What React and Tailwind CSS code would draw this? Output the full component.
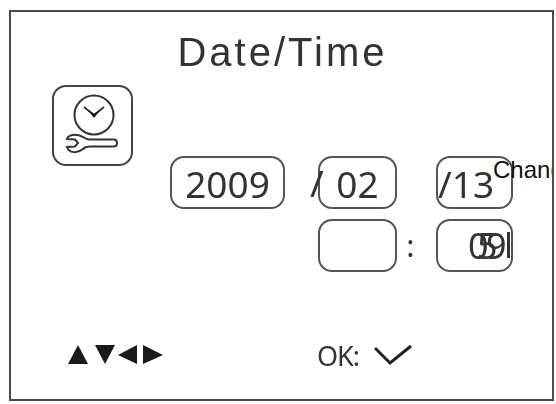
function ClockWrench() {
  return (
    <svg width="56" height="64" viewBox="0 0 56 64" fill="none" stroke="#333" strokeWidth="2">
      <circle cx="29" cy="21" r="19.5" />
      <path d="M19 13 L29 21 L39 13" strokeWidth="1.8" />
      <path d="M22 15 L29 24 L36 15 L29 20 Z" fill="#111" stroke="none" />
      <path d="M18 43 C10 39 3 41 2 45 L10 45.5 L13 49 L10 52.5 L2 53 C4 59 12 60 18 55 C20 53 22 52.5 25 52.5 L49 52.5 C53 52.5 53 45.5 49 45.5 L25 45.5 C22 45.5 20 44.5 18 43 Z" />
    </svg>
  );
}

function Field({ className, children }) {
  return (
    <div className={`relative h-[53px] rounded-[14px] border-2 border-[#555] flex items-center justify-center pt-[2px] text-[37px] leading-none text-[#333] font-['Noto_Sans',sans-serif] ${className}`}>
      {children}
    </div>
  );
}

export default function App() {
  return (
    <div className="w-[556px] h-[404px] bg-white pt-[10px] pl-[9px]">
      <div className="relative w-[545px] h-[391px] border-2 border-[#4a4a4a] overflow-hidden flex flex-col">
        <h1 className="mt-[19px] h-[42px] pl-[2px] text-center text-[40px] leading-[42px] tracking-[3px] text-[#333] font-['Liberation_Sans',sans-serif] blur-[0.4px]">
          Date/Time
        </h1>
        <div className="ml-[41px] mt-[12px] w-[81px] h-[81px] rounded-[14px] border-2 border-[#444] flex items-center justify-center">
          <ClockWrench />
        </div>
        <div className="ml-[159px] -mt-[10px] flex flex-col gap-[10px] blur-[0.3px]">
          <div className="flex items-center">
            <Field className="w-[115px]">2009</Field>
            <span className="w-[33px] pl-[25px] text-[37px] leading-none text-[#333] font-['Noto_Sans',sans-serif] z-10 relative">/</span>
            <Field className="w-[79px]">02</Field>
            <div className="w-[39px]" />
            <Field className="w-[77px] justify-start">/13</Field>
          </div>
          <div className="flex items-center">
            <div className="w-[148px]" />
            <Field className="w-[79px]" />
            <span className="w-[39px] pr-[12px] text-center text-[31px] leading-none text-[#333] font-['Noto_Sans',sans-serif]">:</span>
            <Field className="w-[77px]">
              <span className="absolute left-[30px] top-0 text-[36px] leading-[50px]">0</span>
              <span className="absolute left-[39px] top-0 text-[36px] leading-[50px]">5</span>
              <span className="absolute left-[48px] top-0 text-[36px] leading-[50px]">9</span>
              <span className="absolute left-[69px] top-[11px] w-[3px] h-[26px] bg-[#333]" />
            </Field>
          </div>
        </div>
        <div className="ml-[57px] mt-[69px] flex items-center h-[28px]">
          <svg width="95" height="20" viewBox="0 0 95 20" fill="#1a1a1a">
            <path d="M10 0 L20 19 L0 19 Z" />
            <path d="M27 0 L47 0 L37 19 Z" />
            <path d="M69 0 L69 19 L50 10 Z" />
            <path d="M75 0 L95 10 L75 19 Z" />
          </svg>
          <span className="ml-[154px] text-[27px] leading-none tracking-[-1px] text-[#333] font-['Noto_Sans',sans-serif] blur-[0.3px]">OK:</span>
          <svg className="ml-[15px]" width="38" height="22" viewBox="0 0 38 22" fill="none" stroke="#222" strokeWidth="3">
            <path d="M1 4 L16 19 L37 2" />
          </svg>
        </div>
        <span className="absolute left-[482px] top-[146px] text-[24px] leading-none text-[#111] font-['Liberation_Sans',sans-serif] whitespace-nowrap">
          Change
        </span>
      </div>
    </div>
  );
}
